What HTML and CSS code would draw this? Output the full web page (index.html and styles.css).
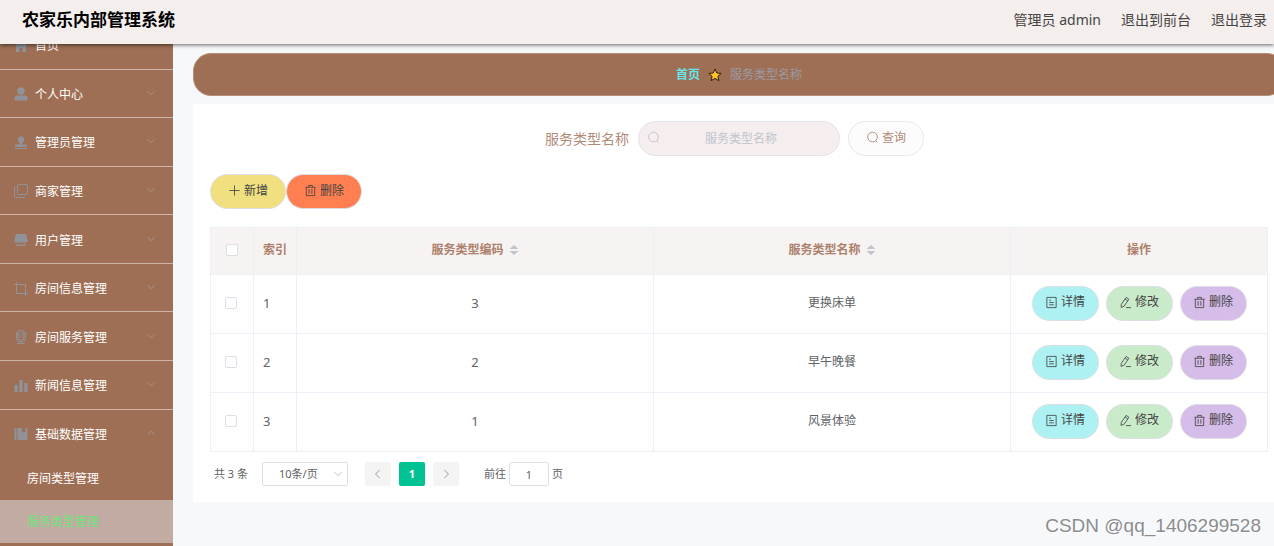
FILE: index.html
```html
<!DOCTYPE html>
<html lang="zh-CN">
<head>
<meta charset="utf-8">
<title>农家乐内部管理系统</title>
<link rel="stylesheet" href="styles.css">
</head>
<body>
<svg class="sprite" aria-hidden="true">
  <symbol id="down" viewBox="0 0 10 10"><path d="M1.5 3.2 5 6.7 8.5 3.2" fill="none" stroke="currentColor"/></symbol>
  <symbol id="up" viewBox="0 0 10 10"><path d="M1.5 6.7 5 3.2 8.5 6.7" fill="none" stroke="currentColor"/></symbol>
  <symbol id="search" viewBox="0 0 14 14"><circle cx="7" cy="6.5" r="5.2" fill="none" stroke="currentColor"/><path d="m10.500 10.500 1.700 1.700" stroke="currentColor"/></symbol>
  <symbol id="trash" viewBox="0 0 14 14"><path d="M1.5 3.5h11M5 3.500V1.500h4v2M2.500 3.500v9h9v-9M5.500 5.500v5M8.500 5.500v5" fill="none" stroke="currentColor" stroke-width=".9"/></symbol>
  <symbol id="doc" viewBox="0 0 14 14"><path d="M2 1.500h10v11H2zM4.500 4.500h2M4.500 7h5M4.500 9.500h5" fill="none" stroke="currentColor" stroke-width=".9"/></symbol>
  <symbol id="edit" viewBox="0 0 14 14"><path d="m2.500 9 5.200-7.500 3 2L5.500 11l-3.300 1.300zM6.500 3.200l3 2M7.500 12.500h5.500" fill="none" stroke="currentColor" stroke-width=".9"/></symbol>
  <symbol id="plus" viewBox="0 0 14 14"><path d="M7 1.500v11M1.500 7h11" stroke="currentColor" stroke-width=".9"/></symbol>
</svg>

<header class="topbar">
  <h1 class="brand">农家乐内部管理系统</h1>
  <nav class="account">
    <span>管理员 admin</span>
    <a href="#front">退出到前台</a>
    <a href="#logout">退出登录</a>
  </nav>
</header>

<div class="layout">
  <aside class="sidebar">
    <nav class="menu">
      <a class="item" href="#home"><svg class="glyph" viewBox="0 0 14 14"><path d="M7 1 .5 6.500H2V13h3.500V9h3v4H12V6.500h1.500L11.500 4.800V2H10v1.500z"/></svg><span>首页</span></a>
      <a class="item" href="#me"><svg class="glyph" viewBox="0 0 14 14"><circle cx="7" cy="4" r="3.700"/><path d="M.5 13.500v-2a3 3 0 0 1 3-3h7a3 3 0 0 1 3 3v2z"/></svg><span>个人中心</span><svg class="arrow"><use href="#down"/></svg></a>
      <a class="item" href="#admins"><svg class="glyph" viewBox="0 0 14 14"><path d="M5.500 6.500a3.200 3.200 0 1 1 3 0v2H12a1 1 0 0 1 1 1V11H1V9.500a1 1 0 0 1 1-1h3.500zM1 12h12v1H1z"/></svg><span>管理员管理</span><svg class="arrow"><use href="#down"/></svg></a>
      <a class="item" href="#merchants"><svg class="glyph outline" viewBox="0 0 14 14"><rect x="3.500" y=".5" width="10" height="10" rx="1.500"/><path d="M1.500 3H.5v9a1.500 1.500 0 0 0 1.500 1.500h8.500v-1"/></svg><span>商家管理</span><svg class="arrow"><use href="#down"/></svg></a>
      <a class="item" href="#users"><svg class="glyph" viewBox="0 0 14 14"><path d="M2 1h10l1.500 6a2 2 0 0 1-1.500 2.500H2A2 2 0 0 1 .5 7zM2.500 10.500h1.200v1h6.600v-1h1.200v2.500h-9z"/></svg><span>用户管理</span><svg class="arrow"><use href="#down"/></svg></a>
      <a class="item" href="#rooms"><svg class="glyph outline" viewBox="0 0 14 14"><path d="M0 2.500h11.500V14M2.500 0v11.500H14"/></svg><span>房间信息管理</span><svg class="arrow"><use href="#down"/></svg></a>
      <a class="item" href="#services"><svg class="glyph outline" viewBox="0 0 14 14"><rect x="4" y=".5" width="6" height="9.500" rx="2"/><path d="M4.500 3h2m1 0h2m-5 2h2m1 0h2m-5 2h2m1 0h2M2.500 2v6.500a3 3 0 0 0 3 3h3a3 3 0 0 0 3-3V2M7 11.500v2M3 13.500h8"/></svg><span>房间服务管理</span><svg class="arrow"><use href="#down"/></svg></a>
      <a class="item" href="#news"><svg class="glyph" viewBox="0 0 14 14"><path d="M.5 6h3.200v7H.5zM5.400 1h3.200v12H5.400zM10.300 4h3.200v9h-3.200z"/></svg><span>新闻信息管理</span><svg class="arrow"><use href="#down"/></svg></a>
      <a class="item open" href="#base"><svg class="glyph" viewBox="0 0 14 14"><path d="M.5 1h2v12h-2zM3.500 1H8v5l1.800-1.500L11.500 6V1h2v12h-10z"/></svg><span>基础数据管理</span><svg class="arrow"><use href="#up"/></svg></a>
      <a class="subitem" href="#room-types">房间类型管理</a>
      <a class="subitem active" href="#service-types">服务类型管理</a>
    </nav>
  </aside>

  <main class="main">
    <nav class="crumbs">
      <a href="#home">首页</a>
      <svg class="star" viewBox="0 0 14 14"><path d="m7 1 1.800 4 4.400.4-3.300 2.900 1 4.300L7 10.400l-3.900 2.200 1-4.300L.8 5.400 5.200 5z"/></svg>
      <span>服务类型名称</span>
    </nav>

    <section class="panel">
      <form class="search">
        <label for="name">服务类型名称</label>
        <div class="field"><svg class="icon"><use href="#search"/></svg><input id="name" type="text" placeholder="服务类型名称"></div>
        <button class="btn query" type="button"><svg class="icon"><use href="#search"/></svg>查询</button>
      </form>

      <div class="tools">
        <button class="btn add" type="button"><svg class="icon"><use href="#plus"/></svg>新增</button>
        <button class="btn remove" type="button"><svg class="icon"><use href="#trash"/></svg>删除</button>
      </div>

      <table class="grid">
        <colgroup><col class="c-check"><col class="c-index"><col><col><col class="c-ops"></colgroup>
        <thead>
          <tr>
            <th><input class="check" type="checkbox" aria-label="全选"></th>
            <th class="left">索引</th>
            <th>服务类型编码<svg class="sort" viewBox="0 0 10 12"><path d="M5 1 9.500 5h-9zM5 11 .5 7h9z"/></svg></th>
            <th>服务类型名称<svg class="sort" viewBox="0 0 10 12"><path d="M5 1 9.500 5h-9zM5 11 .5 7h9z"/></svg></th>
            <th>操作</th>
          </tr>
        </thead>
        <tbody>
          <tr>
            <td class="pick"><input class="check" type="checkbox" aria-label="选择 1"></td><td class="left num">1</td><td class="num">3</td><td>更换床单</td>
            <td><div class="ops"><button class="btn detail" type="button"><svg class="icon"><use href="#doc"/></svg>详情</button><button class="btn edit" type="button"><svg class="icon"><use href="#edit"/></svg>修改</button><button class="btn del" type="button"><svg class="icon"><use href="#trash"/></svg>删除</button></div></td>
          </tr>
          <tr>
            <td class="pick"><input class="check" type="checkbox" aria-label="选择 2"></td><td class="left num">2</td><td class="num">2</td><td>早午晚餐</td>
            <td><div class="ops"><button class="btn detail" type="button"><svg class="icon"><use href="#doc"/></svg>详情</button><button class="btn edit" type="button"><svg class="icon"><use href="#edit"/></svg>修改</button><button class="btn del" type="button"><svg class="icon"><use href="#trash"/></svg>删除</button></div></td>
          </tr>
          <tr>
            <td class="pick"><input class="check" type="checkbox" aria-label="选择 3"></td><td class="left num">3</td><td class="num">1</td><td>风景体验</td>
            <td><div class="ops"><button class="btn detail" type="button"><svg class="icon"><use href="#doc"/></svg>详情</button><button class="btn edit" type="button"><svg class="icon"><use href="#edit"/></svg>修改</button><button class="btn del" type="button"><svg class="icon"><use href="#trash"/></svg>删除</button></div></td>
          </tr>
        </tbody>
      </table>

      <div class="pager">
        <span>共 3 条</span>
        <div class="size"><select aria-label="每页条数"><option>10条/页</option><option>20条/页</option></select><svg class="arrow"><use href="#down"/></svg></div>
        <div class="pages">
          <button type="button" aria-label="上一页" disabled><svg viewBox="0 0 10 10"><path d="M6.500 1.500 3 5l3.500 3.500"/></svg></button>
          <button type="button" class="current">1</button>
          <button type="button" aria-label="下一页" disabled><svg viewBox="0 0 10 10"><path d="M3.500 1.500 7 5 3.500 8.500"/></svg></button>
        </div>
        <div class="jump"><label for="page">前往</label><input id="page" type="text" value="1"><span>页</span></div>
      </div>
    </section>
  </main>
</div>
<div class="watermark">CSDN @qq_1406299528</div>
</body>
</html>
```

FILE: styles.css
```css
* { box-sizing: border-box; }

body {
  margin: 0;
  height: 100vh;
  overflow: hidden;
  display: flex;
  flex-direction: column;
  background: #f7f8fa;
  color: #606266;
  font: 12px/20px "Noto Sans", "Noto Sans CJK SC", sans-serif;
}

a { color: inherit; text-decoration: none; }
button, input, select { font: inherit; color: inherit; margin: 0; }
.sprite { display: none; }

.topbar {
  position: relative;
  z-index: 2;
  flex: none;
  height: 44px;
  padding: 0 7px 5px 22px;
  display: flex;
  align-items: center;
  justify-content: space-between;
  background: #f4eeed;
  box-shadow: 0 1px 4px rgba(0, 0, 0, 0.6);
}
.brand { margin: 0; font-size: 17px; line-height: 24px; color: #000; }
.account { display: flex; gap: 20px; font-size: 14px; color: #444; }

.layout { flex: 1; min-height: 0; display: flex; }

.sidebar { flex: none; width: 173px; background: #9e6f55; color: #fff; }
.menu {
  display: flex;
  flex-direction: column;
  height: calc(100% + 23px);
  margin-top: -23px;
  padding-bottom: 3px;
}
.item {
  flex: 1;
  display: flex;
  align-items: center;
  padding: 3px 17px 0 14px;
  border-bottom: 1px solid #cdb5a9;
}
.item.open { border-bottom: 0; }
.glyph { width: 14px; height: 14px; margin: 0 7px 1px 0; fill: #909399; }
.glyph.outline { fill: none; stroke: #909399; }
.arrow { width: 10px; height: 10px; color: #a5938b; }
.item .arrow { margin: 0 0 4px auto; }
.subitem { flex: none; line-height: 43px; padding-left: 27px; }
.subitem.active { background: #c1aba3; color: #6fe57b; }

.main { flex: 1; min-width: 0; margin-right: -11px; padding: 9px 0 0 20px; }

.crumbs {
  display: flex;
  align-items: center;
  justify-content: center;
  gap: 8px;
  height: 43px;
  border: 1px solid #b58d78;
  border-radius: 18px;
  background: #9e6f55;
  color: #9a9aa4;
}
.crumbs a { color: #66e5ea; font-weight: 700; }
.star { width: 14px; height: 14px; fill: #ffc02e; stroke: #33210f; }

.panel { margin-top: 8px; padding: 17px 17px 16px; background: #fff; }

.search { display: flex; align-items: center; justify-content: center; padding-right: 9px; }
.search label { margin-right: 9px; font-size: 14px; color: #b18a78; }
.field { position: relative; width: 202px; margin-right: 8px; color: #c0c4cc; }
.field .icon { position: absolute; left: 9px; top: 10px; }
.field input {
  display: block;
  width: 100%;
  height: 35px;
  padding: 0 22px 0 26px;
  border: 1px solid #e4e5ea;
  border-radius: 18px;
  background: #f5edee;
  text-align: center;
}
.field input::placeholder { color: #c0c4cc; }

.icon { width: 13px; height: 13px; flex: none; }
.btn {
  display: flex;
  align-items: center;
  justify-content: center;
  gap: 3px;
  width: 76px;
  height: 35px;
  padding: 0 0 2px;
  border: 1px solid #dcdfe6;
  border-radius: 18px;
  color: #444;
}
.query { background: #fcfcfc; border-color: #e8e9ea; color: #b18a78; }
.add { background: #f0e080; }
.remove { background: #ff7f50; }
.tools { display: flex; margin: 18px 0; }

.grid {
  width: 100%;
  table-layout: fixed;
  border-collapse: collapse;
}
.c-check, .c-index { width: 43px; }
.c-ops { width: 257px; }
.grid th, .grid td { padding: 0 0 2px; border: 1px solid #edeff6; text-align: center; }
.grid th { height: 47px; background: #f7f3f2; color: #ac806a; }
.grid td { height: 59px; }
.grid .left { text-align: left; padding-left: 9px; }
.grid .num { font-size: 13px; }
.grid .pick { padding-right: 3px; }
.check {
  appearance: none;
  display: block;
  width: 12px;
  height: 12px;
  margin: 0 auto;
  border: 1px solid #dcdfe6;
  border-radius: 2px;
  background: #fff;
}
.sort { width: 10px; height: 12px; margin-left: 5px; vertical-align: -2px; fill: #c0c4cc; }
.ops { display: flex; justify-content: center; gap: 7px; }
.ops .btn { width: 67px; }
.detail { background: #adf1f2; }
.edit { background: #caebca; }
.del { background: #d6bce8; }

.pager { display: flex; align-items: center; padding: 10px 0 0 4px; font-size: 11px; }
.size { position: relative; margin: 0 17px 0 14px; }
.size .arrow { position: absolute; right: 5px; top: 7px; color: #c0c4cc; }
.size select {
  appearance: none;
  display: block;
  width: 86px;
  height: 24px;
  padding: 0 16px;
  border: 1px solid #dcdfe6;
  border-radius: 2px;
  background: #fff;
}
.pages { display: flex; gap: 8px; margin-right: 25px; }
.pages button {
  display: flex;
  align-items: center;
  justify-content: center;
  width: 26px;
  height: 24px;
  padding: 0;
  border: 0;
  border-radius: 2px;
  background: #f4f4f5;
}
.pages .current { background: #00c292; color: #fff; font-weight: 700; }
.pages svg { width: 12px; height: 12px; fill: none; stroke: #b9bcc4; }
.jump { display: flex; align-items: center; gap: 3px; }
.jump input {
  width: 40px;
  height: 24px;
  padding: 0;
  border: 1px solid #dcdfe6;
  border-radius: 3px;
  text-align: center;
}

.watermark {
  position: absolute;
  right: 13px;
  bottom: 8px;
  font: 19px/24px "Liberation Sans", sans-serif;
  color: #8b8d90;
  text-shadow: 1px 1px 0 #fff;
}
```
